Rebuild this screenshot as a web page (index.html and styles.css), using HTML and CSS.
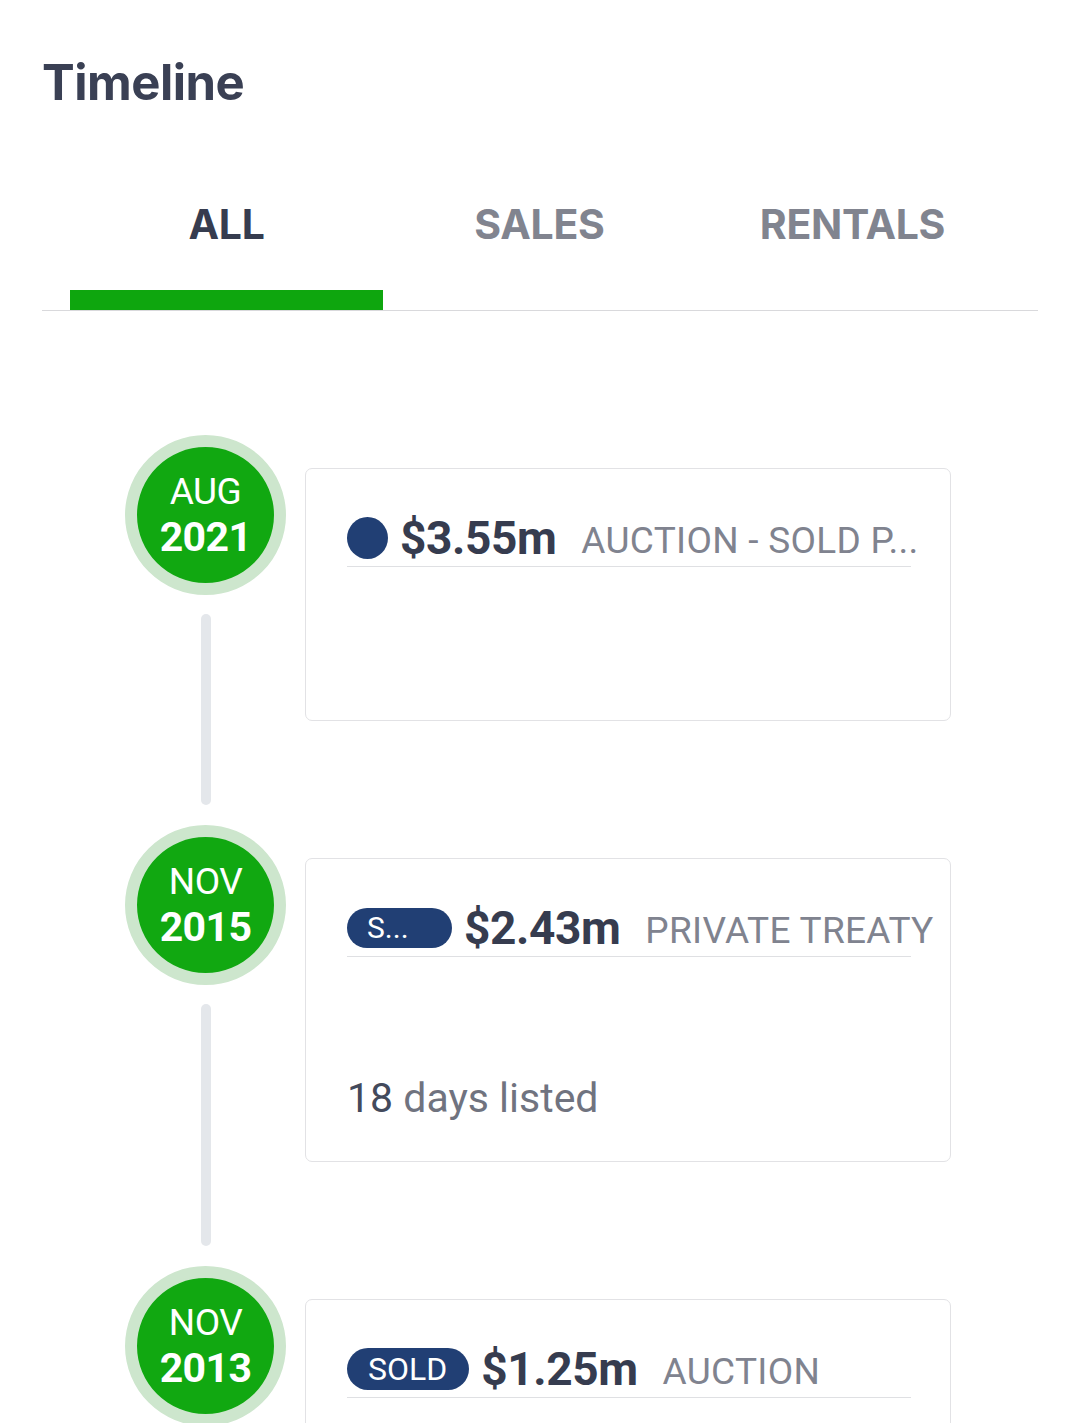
FILE: index.html
```html
<!DOCTYPE html>
<html lang="en">
<head>
<meta charset="utf-8">
<title>Timeline</title>
<link rel="stylesheet" href="styles.css">
</head>
<body>
<main class="page">
  <h1 class="title">Timeline</h1>
  <nav class="tabs">
    <div class="tab active"><span class="tab-label">ALL</span><span class="tab-bar"></span></div>
    <div class="tab"><span class="tab-label">SALES</span><span class="tab-bar"></span></div>
    <div class="tab"><span class="tab-label">RENTALS</span><span class="tab-bar"></span></div>
  </nav>

  <ol class="timeline">
    <li class="event">
      <div class="axis">
        <div class="date"><span class="month">AUG</span><span class="year">2021</span></div>
        <div class="connector"></div>
      </div>
      <div class="card">
        <div class="card-head">
          <span class="dot"></span>
          <span class="price">$3.55m</span>
          <span class="kind">AUCTION - SOLD P...</span>
        </div>
        <div class="card-body"></div>
      </div>
    </li>
    <li class="event">
      <div class="axis">
        <div class="date"><span class="month">NOV</span><span class="year">2015</span></div>
        <div class="connector"></div>
      </div>
      <div class="card">
        <div class="card-head">
          <span class="badge short">S...</span>
          <span class="price">$2.43m</span>
          <span class="kind">PRIVATE TREATY</span>
        </div>
        <div class="card-body"></div>
        <p class="listed"><span class="num">18</span> days listed</p>
      </div>
    </li>
    <li class="event">
      <div class="axis">
        <div class="date"><span class="month">NOV</span><span class="year">2013</span></div>
        <div class="connector"></div>
      </div>
      <div class="card">
        <div class="card-head">
          <span class="badge">SOLD</span>
          <span class="price">$1.25m</span>
          <span class="kind">AUCTION</span>
        </div>
        <div class="card-body"></div>
      </div>
    </li>
  </ol>
</main>
</body>
</html>
```

FILE: styles.css
```css
* { box-sizing: border-box; }

html, body {
  margin: 0;
  padding: 0;
  background: #ffffff;
}

body {
  font-family: Roboto, "Liberation Sans", Arial, sans-serif;
  color: #3a4053;
  overflow: hidden;
}

.page {
  padding: 53px 42px 0 42px;
}

.title {
  margin: 0;
  font-family: Inter, Roboto, sans-serif;
  font-weight: 700;
  font-size: 49px;
  line-height: 60px;
  letter-spacing: -0.5px;
  color: #3a4054;
}

.tabs {
  display: flex;
  margin-top: 81px;
  padding-left: 28px;
  padding-right: 28px;
  border-bottom: 1px solid #d9d9dc;
}

.tab {
  width: 313px;
  display: flex;
  flex-direction: column;
  align-items: center;
}

.tab-label {
  font-family: Inter, Roboto, sans-serif;
  font-weight: 700;
  font-size: 41px;
  line-height: 60px;
  letter-spacing: -0.3px;
  color: #81848f;
}

.tab.active .tab-label { color: #363c4f; }

.tab-bar {
  align-self: stretch;
  height: 20px;
  margin-top: 36px;
}

.tab.active .tab-bar { background: #0ea60e; }

.timeline {
  list-style: none;
  margin: 124px 0 0 83px;
  padding: 0;
}

.event {
  display: flex;
  gap: 19px;
}

.axis {
  width: 161px;
  flex: none;
  display: flex;
  flex-direction: column;
  align-items: center;
}

.date {
  width: 161px;
  height: 160px;
  border-radius: 50%;
  background: #11a811;
  border: 12px solid #cde6cd;
  color: #ffffff;
  display: flex;
  flex-direction: column;
  align-items: center;
  justify-content: center;
}

.month {
  font-size: 37px;
  line-height: 44px;
  letter-spacing: -0.5px;
}

.year {
  font-size: 41px;
  font-weight: 700;
  line-height: 46px;
  letter-spacing: -0.6px;
}

.connector {
  flex: 1;
  width: 10px;
  margin: 19px 0 20px;
  border-radius: 5px;
  background: #e4e7eb;
}

.card {
  width: 646px;
  margin-top: 33px;
  margin-bottom: 104px;
  padding: 0 41px 37px;
  border: 1px solid #e2e2e5;
  border-radius: 7px;
}

.card-head {
  display: flex;
  align-items: center;
  width: 564px;
  height: 98px;
  padding-top: 46px;
  padding-bottom: 6px;
  border-bottom: 1px solid #dfe0e3;
  white-space: nowrap;
}

.dot {
  width: 41px;
  height: 42px;
  border-radius: 50%;
  background: #213f74;
  flex: none;
}

.badge {
  flex: none;
  height: 42px;
  padding: 0 22px 0 21px;
  border-radius: 21px;
  background: #213f74;
  color: #ffffff;
  font-size: 32px;
  line-height: 42px;
  letter-spacing: 0;
}

.badge.short {
  width: 105px;
  height: 40px;
  padding: 0 18px 0 20px;
  line-height: 40px;
  font-size: 30px;
}

.price {
  margin-left: 12px;
  font-size: 46px;
  font-weight: 700;
  letter-spacing: -0.4px;
  color: #363c4f;
}

.kind {
  margin-left: 25px;
  padding-top: 6px;
  font-size: 37px;
  letter-spacing: 0.3px;
  color: #80838f;
}

.card-body {
  height: 116px;
}

.listed {
  margin: 0;
  height: 51px;
  font-size: 41px;
  line-height: 51px;
  letter-spacing: 0;
  color: #70737f;
}

.listed .num { color: #434a5c; }
```
